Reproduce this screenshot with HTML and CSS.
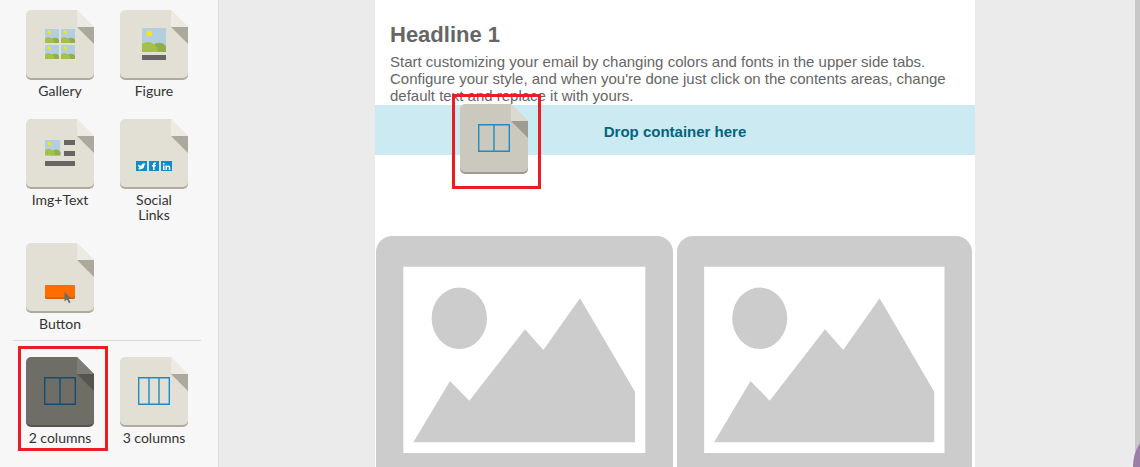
FILE: index.html
```html
<!DOCTYPE html>
<html lang="en">

<head>
    <meta charset="UTF-8">
    <title>Email builder</title>
    <link rel="stylesheet" href="styles.css">
</head>

<body>
    <svg class="defs" width="0" height="0">
        <symbol id="tile" viewBox="0 0 68 70">
            <path class="tile_edge" d="M5 3H51L68 20V65A5 5 0 0 1 63 70H5A5 5 0 0 1 0 65V8A5 5 0 0 1 5 3Z" />
            <path class="tile_body" d="M5 0H51L68 17V63A5 5 0 0 1 63 68H5A5 5 0 0 1 0 63V5A5 5 0 0 1 5 0Z" />
            <path class="tile_light" d="M51 0L68 17H51Z" />
            <path class="tile_dark" d="M51 17H68V34Z" />
        </symbol>
        <symbol id="pic" viewBox="0 0 16 16">
            <rect width="16" height="16" fill="#b3cede" />
            <circle cx="4.8" cy="3.6" r="1.9" fill="#f5e616" />
            <circle cx="11.5" cy="15.5" r="5.6" fill="#93ad48" />
            <circle cx="4" cy="16" r="6.6" fill="#a5c04a" />
        </symbol>
    </svg>

    <aside class="sidebar">
        <div class="block_grid">
            <div class="block row_one">
                <svg class="tile" viewBox="0 0 68 70">
                    <use href="#tile" width="68" height="70" />
                    <use href="#pic" x="19" y="19" width="14" height="14" />
                    <use href="#pic" x="35" y="19" width="14" height="14" />
                    <use href="#pic" x="19" y="35" width="14" height="14" />
                    <use href="#pic" x="35" y="35" width="14" height="14" />
                </svg>
                <span>Gallery</span>
            </div>
            <div class="block row_one">
                <svg class="tile" viewBox="0 0 68 70">
                    <use href="#tile" width="68" height="70" />
                    <use href="#pic" x="22" y="18" width="24" height="24" />
                    <rect x="22" y="45" width="24" height="5" fill="#666" />
                </svg>
                <span>Figure</span>
            </div>
            <div class="block row_two">
                <svg class="tile" viewBox="0 0 68 70">
                    <use href="#tile" width="68" height="70" />
                    <use href="#pic" x="19" y="21" width="15.5" height="15.5" />
                    <rect x="38" y="21" width="11" height="5" fill="#666" />
                    <rect x="38" y="32" width="11" height="5" fill="#666" />
                    <rect x="19" y="42" width="30" height="5" fill="#666" />
                </svg>
                <span>Img+Text</span>
            </div>
            <div class="block row_two">
                <svg class="tile" viewBox="0 0 68 70">
                    <use href="#tile" width="68" height="70" />
                    <rect x="16" y="42" width="11" height="10" fill="#0f8ccb" />
                    <rect x="29" y="42" width="10" height="10" fill="#0f8ccb" />
                    <rect x="41" y="42" width="11" height="10" fill="#0f8ccb" />
                    <path d="M18 45.5Q20 47 21.5 46.5Q22 44 24 44.5L25.5 44.5L24.5 46Q24 50 20 50.5Q18.5 50.5 17.5 49.8Q19 49.8 19.8 49Q18 48 18 45.5Z" fill="#fff" />
                    <path d="M33 51V47.5H32V46H33V45Q33 43.5 35 43.5H36V45H35.2Q34.6 45 34.6 45.6V46H36L35.8 47.5H34.6V51Z" fill="#fff" />
                    <path d="M43 46.5H44.5V51H43ZM43 44H44.5V45.5H43ZM45.5 46.5H47V47.2Q47.5 46.4 48.5 46.4Q50.3 46.4 50.3 48.5V51H48.8V48.8Q48.8 47.7 48 47.7Q47 47.7 47 48.8V51H45.5Z" fill="#fff" />
                </svg>
                <span>Social<br>Links</span>
            </div>
            <div class="block row_three">
                <svg class="tile" viewBox="0 0 68 70">
                    <use href="#tile" width="68" height="70" />
                    <rect x="19" y="42" width="30" height="14" rx="1.5" fill="#d9590a" />
                    <rect x="19" y="42" width="30" height="12.5" rx="1.5" fill="#ff6c00" />
                    <path d="M38.5 49L45.5 55.5H42.5L44.5 59.5L43 60.2L41 56.5L38.5 58.5Z" fill="#6f6e66" />
                </svg>
                <span>Button</span>
            </div>
        </div>
        <hr class="divider">
        <div class="block_grid">
            <div class="block">
                <svg class="tile tile_active" viewBox="0 0 68 70">
                    <use href="#tile" width="68" height="70" />
                    <path class="cols_dark" d="M18.7 20.7H49.3V47.3H18.7ZM34 20.7V47.3" />
                </svg>
                <span>2 columns</span>
            </div>
            <div class="block">
                <svg class="tile" viewBox="0 0 68 70">
                    <use href="#tile" width="68" height="70" />
                    <path class="cols_blue" d="M18.7 20.7H49.3V47.3H18.7ZM29 20.7V47.3M39 20.7V47.3" />
                </svg>
                <span>3 columns</span>
            </div>
        </div>
    </aside>

    <main class="canvas">
        <div class="email">
            <h1 class="headline">Headline 1</h1>
            <p class="intro">Start customizing your email by changing colors and fonts in the upper side tabs. Configure your style, and when you're done just click on the contents areas, change default text and replace it with yours.</p>
            <div class="dropzone">Drop container here</div>
            <div class="pictures">
                <svg class="placeholder" viewBox="0 0 297 240" preserveAspectRatio="none">
                    <path d="M16 0H281A16 16 0 0 1 297 16V240H0V16A16 16 0 0 1 16 0ZM27.3 30.7V217H269.3V30.7Z" fill-rule="evenodd" />
                    <ellipse cx="83.3" cy="82.3" rx="27.7" ry="30.7" />
                    <path d="M37.3 206.3L74 145L93.3 164.7L149 93.3L167.3 114L204 62.3L259 155.7V206.3Z" />
                </svg>
                <svg class="placeholder" viewBox="0 0 297 240" preserveAspectRatio="none">
                    <path d="M16 0H281A16 16 0 0 1 297 16V240H0V16A16 16 0 0 1 16 0ZM27.3 30.7V217H269.3V30.7Z" fill-rule="evenodd" />
                    <ellipse cx="83.3" cy="82.3" rx="27.7" ry="30.7" />
                    <path d="M37.3 206.3L74 145L93.3 164.7L149 93.3L167.3 114L204 62.3L259 155.7V206.3Z" />
                </svg>
            </div>
        </div>
        <div class="scrollbar"></div>
        <div class="corner_arc"></div>
    </main>

    <!-- the tile being dragged and the two red marks sit over the page -->
    <svg class="tile tile_drag" viewBox="0 0 68 70">
        <use href="#tile" width="68" height="70" />
        <path class="cols_blue" d="M18.7 20.7H49.3V47.3H18.7ZM34 20.7V47.3" />
    </svg>
    <div class="red_box red_drag"></div>
    <div class="red_box red_source"></div>
</body>

</html>
```

FILE: styles.css
```css
html, body {
    margin: 0;
    padding: 0;
}

body {
    display: flex;
    width: 1140px;
    height: 467px;
    overflow: hidden;
    position: relative;
    background-color: #ebebeb;
    font-family: "Liberation Sans", Arial, sans-serif;
}

.defs {
    position: absolute;
}

.sidebar {
    width: 218px;
    flex: none;
    padding-top: 10px;
    background-color: #f7f7f7;
    border-right: 1px solid #dcdcdc;
}

.block_grid {
    display: flex;
    flex-wrap: wrap;
    padding-left: 13px;
    width: 188px;
}

.block {
    width: 94px;
    text-align: center;
    font-family: Lato, "Open Sans", sans-serif;
    font-size: 14px;
    line-height: 15px;
    color: #333;
}

.block span {
    display: block;
    margin-top: 3px;
}

.row_one {
    height: 109px;
}

.row_two {
    height: 124px;
}

.row_three {
    height: 97px;
}

.tile {
    display: block;
    width: 68px;
    height: 70px;
    margin: 0 auto;
}

.tile_edge {
    fill: var(--edge, #aeac9f);
}

.tile_body {
    fill: var(--body, #e2e0d4);
}

.tile_light {
    fill: var(--light, #ecebe3);
}

.tile_dark {
    fill: var(--dark, #aaa99c);
}

.tile_active {
    --edge: #55544e;
    --body: #6f6e66;
    --light: #7e7d76;
    --dark: #55544e;
}

.tile_drag {
    --edge: #9e9c90;
    --body: #cbc9bd;
    --light: #dbdad1;
    --dark: #9e9c90;
    position: absolute;
    left: 460px;
    top: 104px;
    margin: 0;
}

.cols_dark, .cols_blue {
    fill: none;
    stroke-width: 1.4;
}

.cols_dark {
    stroke: #0f4f73;
}

.cols_blue {
    stroke: #1d8cc6;
}

.divider {
    width: 188px;
    height: 1px;
    margin: 0 0 16px 13px;
    border: 0;
    background-color: #d9d9d9;
}

.canvas {
    flex: 1;
    display: flex;
    justify-content: space-between;
    position: relative;
    padding-left: 156px;
    overflow: hidden;
}

.email {
    width: 600px;
    height: 467px;
    flex: none;
    overflow: hidden;
    background-color: #fff;
}

.headline {
    margin: 0;
    padding: 22px 15px 0;
    font-size: 22px;
    line-height: 26px;
    color: #666;
}

.intro {
    margin: 5px 0 0;
    padding: 0 15px;
    font-size: 15px;
    line-height: 17px;
    color: #666;
}

.dropzone {
    height: 50px;
    margin-top: 1px;
    line-height: 54px;
    text-align: center;
    font-size: 15px;
    font-weight: bold;
    color: #00667f;
    background-color: #cceaf2;
}

.pictures {
    display: grid;
    grid-template-columns: 297px 295px;
    gap: 4px;
    padding: 81px 0 0 1px;
}

.placeholder {
    display: block;
    width: 100%;
    height: 240px;
    fill: #ccc;
}

.scrollbar {
    width: 5px;
    flex: none;
    background-color: #c8c8c8;
}

.corner_arc {
    position: absolute;
    right: -30px;
    bottom: -30px;
    width: 37px;
    height: 60px;
    border-radius: 50%;
    background-color: #9c7fa6;
}

.red_box {
    position: absolute;
    box-sizing: border-box;
    border: 3px solid #ed1c24;
}

.red_drag {
    left: 452px;
    top: 94px;
    width: 89px;
    height: 95px;
}

.red_source {
    left: 18px;
    top: 346px;
    width: 90px;
    height: 105px;
}
```
